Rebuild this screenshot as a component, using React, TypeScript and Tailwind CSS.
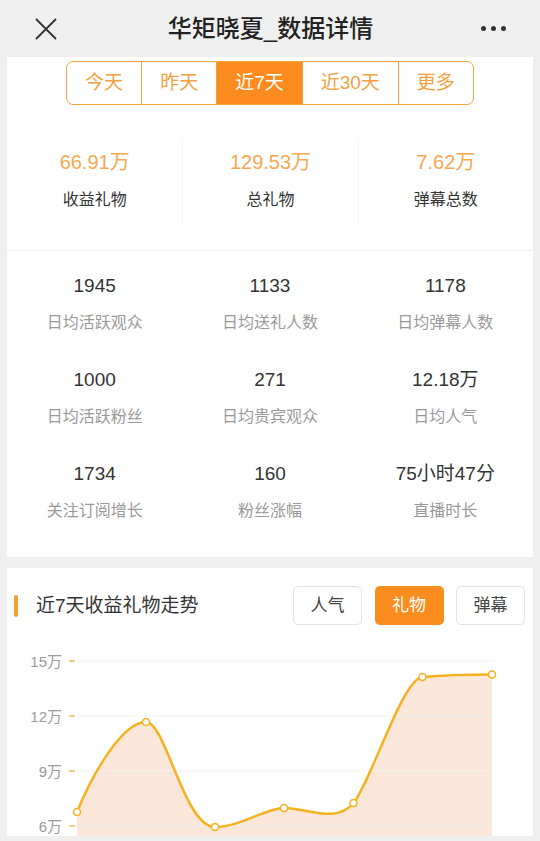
const ranges = ["今天", "昨天", "近7天", "近30天", "更多"];

const summary = [
  { value: "66.91万", label: "收益礼物" },
  { value: "129.53万", label: "总礼物" },
  { value: "7.62万", label: "弹幕总数" },
];

const details = [
  { value: "1945", label: "日均活跃观众" },
  { value: "1133", label: "日均送礼人数" },
  { value: "1178", label: "日均弹幕人数" },
  { value: "1000", label: "日均活跃粉丝" },
  { value: "271", label: "日均贵宾观众" },
  { value: "12.18万", label: "日均人气" },
  { value: "1734", label: "关注订阅增长" },
  { value: "160", label: "粉丝涨幅" },
  { value: "75小时47分", label: "直播时长" },
];

const tabs = ["人气", "礼物", "弹幕"];

const yTicks = [
  { y: 661, label: "15万" },
  { y: 716, label: "12万" },
  { y: 771, label: "9万" },
  { y: 826, label: "6万" },
];

const points: [number, number][] = [
  [77, 812],
  [146, 722],
  [215, 827],
  [284, 808],
  [353.5, 803],
  [422.5, 677],
  [492, 674.5],
];

// hand tuned curve through the points
const linePath =
  "M77,812 C92,775 122,722 146,722 " +
  "C166,722 184,827 215,827 " +
  "C240,827 266,808 284,808 " +
  "C308,808 336,824 353.5,803 " +
  "C372,780 402,679 422.5,677 " +
  "C445,675 470,674.5 492,674.5";

const areaPath = linePath + " L492,836 L77,836 Z";

function TrendChart() {
  return (
    <svg width={526} height={196} viewBox="7 640 526 196" className="block">
      <path d={areaPath} fill="#fbe7da" />
      {yTicks.map((t) => (
        <g key={t.label}>
          <line x1={77} x2={492} y1={t.y} y2={t.y} stroke="#f1f1f1" strokeWidth={1} />
          <line x1={69} x2={75} y1={t.y} y2={t.y} stroke="#e8c25a" strokeWidth={1.5} />
          <text
            x={62}
            y={t.y + 5.5}
            textAnchor="end"
            fontSize={15}
            fill="#9a9a9a"
            fontFamily="'Liberation Sans','Noto Sans CJK SC',sans-serif"
          >
            {t.label}
          </text>
        </g>
      ))}
      <path d={linePath} fill="none" stroke="#f5b21e" strokeWidth={2.5} strokeLinecap="round" />
      {points.map(([x, y]) => (
        <circle key={x} cx={x} cy={y} r={3.5} fill="#fff" stroke="#f5b21e" strokeWidth={1.5} />
      ))}
    </svg>
  );
}

function CloseIcon() {
  return (
    <svg width={22} height={22} viewBox="0 0 22 22" className="block">
      <path d="M1.5 1.5 L20.5 20.5 M20.5 1.5 L1.5 20.5" stroke="#333" strokeWidth={1.8} strokeLinecap="round" />
    </svg>
  );
}

export default function App() {
  return (
    <div className="min-h-screen bg-[#efefef] font-['Liberation_Sans','Noto_Sans_CJK_SC',sans-serif] pb-[5px]">
      <header className="h-[57px] grid grid-cols-[1fr_auto_1fr] items-center pl-[35px] pr-[34px]">
        <CloseIcon />
        <h1 className="text-[24px] leading-[30px] font-medium text-[#222]">华矩晓夏_数据详情</h1>
        <div className="flex justify-end items-center gap-[5px]">
          <span className="w-[5px] h-[5px] rounded-full bg-[#333]" />
          <span className="w-[5px] h-[5px] rounded-full bg-[#333]" />
          <span className="w-[5px] h-[5px] rounded-full bg-[#333]" />
        </div>
      </header>

      <div className="mx-[7px] bg-white">
        <div className="flex justify-center pt-[4px]">
          <div className="flex h-[44px] border-[1.5px] border-[#f6a53e] rounded-[7px] overflow-hidden">
            {ranges.map((r, i) => (
              <div
                key={r}
                className={`flex items-center px-[18px] text-[19px] ${
                  i > 0 ? "border-l-[1.5px] border-[#f6a53e]" : ""
                } ${i === 2 ? "bg-[#fb8c1d] text-white" : "text-[#f3a13f]"}`}
              >
                {r}
              </div>
            ))}
          </div>
        </div>

        <div className="grid grid-cols-3 mt-[35px]">
          {summary.map((s, i) => (
            <div
              key={s.label}
              className={`flex flex-col items-center pt-[10px] pb-[12px] ${
                i > 0 ? "border-l border-[#f3f3f3]" : ""
              }`}
            >
              <div className="text-[20px] leading-[24px] text-[#f4a84f]">{s.value}</div>
              <div className="mt-[15px] text-[16px] leading-[22px] text-[#333]">{s.label}</div>
            </div>
          ))}
        </div>

        <div className="mt-[27px] h-[1px] bg-[#f2f2f2]" />

        <div className="grid grid-cols-3 gap-y-[34px] pt-[23px] pb-[35px]">
          {details.map((d) => (
            <div key={d.label} className="flex flex-col items-center">
              <div className="text-[19px] leading-[24px] text-[#333]">{d.value}</div>
              <div className="mt-[14px] text-[16px] leading-[22px] text-[#999]">{d.label}</div>
            </div>
          ))}
        </div>
      </div>

      <div className="mx-[7px] mt-[11px] bg-white">
        <div className="flex items-center pt-[18px] pb-[15px] pr-[8px]">
          <span className="ml-[7px] w-[4px] h-[22px] rounded-full bg-[#f7a033]" />
          <h2 className="ml-[18px] flex-1 text-[19px] leading-[26px] text-[#333]">近7天收益礼物走势</h2>
          <div className="flex gap-[12.5px]">
            {tabs.map((t) => (
              <button
                key={t}
                className={`w-[69px] h-[39px] rounded-[5px] text-[17px] ${
                  t === "礼物"
                    ? "bg-[#fb8c1e] text-white"
                    : "border border-[#e3e3e3] text-[#444]"
                }`}
              >
                {t}
              </button>
            ))}
          </div>
        </div>
        <TrendChart />
      </div>
    </div>
  );
}
